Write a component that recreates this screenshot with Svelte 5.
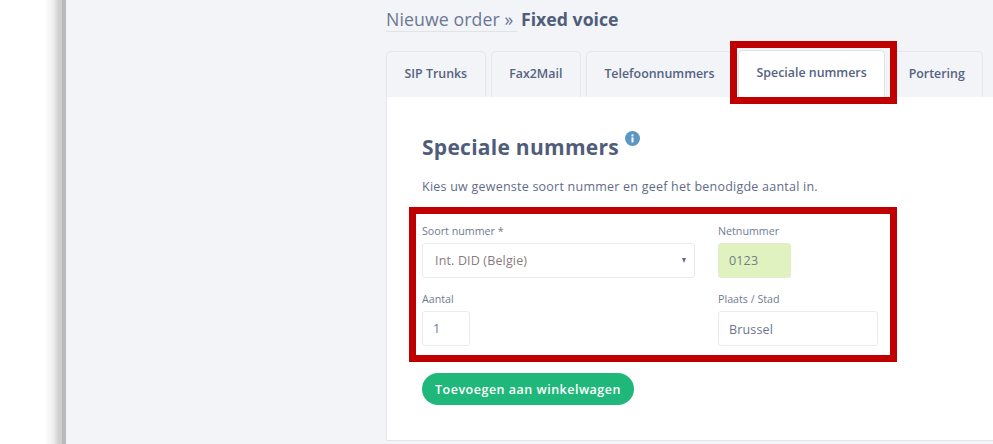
<script lang="ts">
  const tabs = [
    { label: 'SIP Trunks' },
    { label: 'Fax2Mail' },
    { label: 'Telefoonnummers' },
    { label: 'Speciale nummers', active: true },
    { label: 'Portering' }
  ];
</script>

<div class="page">
  <div class="sidebar"></div>

  <main class="content">
    <h1 class="crumbs">
      <span class="crumb-link">Nieuwe order »</span>
      <strong>Fixed voice</strong>
    </h1>

    <nav class="tabs">
      {#each tabs as tab}
        <div class="tab" class:active={tab.active}>
          {tab.label}
          {#if tab.active}<span class="marker tab-marker"></span>{/if}
        </div>
      {/each}
    </nav>

    <section class="panel">
      <h2 class="panel-title">
        Speciale nummers
        <svg class="info" width="15" height="15" viewBox="0 0 15 15">
          <circle cx="7.5" cy="7.5" r="7.5" fill="#5b97c2" />
          <rect x="6.5" y="6.4" width="2" height="5" fill="#fff" />
          <rect x="6.5" y="3.4" width="2" height="2" fill="#fff" />
        </svg>
      </h2>
      <p class="intro">Kies uw gewenste soort nummer en geef het benodigde aantal in.</p>

      <form class="order-form">
        <span class="marker form-marker"></span>

        <div class="field">
          <span class="field-label">Soort nummer *</span>
          <div class="input select">
            <span class="select-value">Int. DID (Belgie)</span>
            <span class="caret"></span>
          </div>
        </div>
        <div class="field">
          <span class="field-label">Netnummer</span>
          <div class="input area">0123</div>
        </div>
        <div class="field">
          <span class="field-label">Aantal</span>
          <div class="input qty">1</div>
        </div>
        <div class="field">
          <span class="field-label">Plaats / Stad</span>
          <div class="input low">Brussel</div>
        </div>
      </form>

      <button class="add-btn" type="button">Toevoegen aan winkelwagen</button>
    </section>
  </main>
</div>

<style>
  :global(body) {
    margin: 0;
    overflow: hidden;
    background: #fff;
  }

  .page {
    display: flex;
    width: 993px;
    height: 444px;
    overflow: hidden;
    font-family: "Open Sans", sans-serif;
    color: #5a6782;
  }

  .sidebar {
    width: 66px;
    flex-shrink: 0;
    background: linear-gradient(to right, #fff 0, #fff 45px, #f5f5f5 50px, #ececec 54px, #d2d2d2 58px, #cccccc 62px, #bababa 62px, #bababa 66px);
  }

  .content {
    flex: 1;
    min-width: 0;
    background: #f2f4f8;
    padding-left: 320px;
  }

  /* Heading */
  .crumbs {
    margin: 0;
    padding-top: 7px;
    height: 39px;
    box-sizing: border-box;
    font-size: 17.7px;
    font-weight: 400;
    line-height: 24px;
    white-space: nowrap;
    color: #6b7794;
  }

  .crumb-link {
    display: inline-block;
    height: 24px;
    padding-right: 4px;
    letter-spacing: 0.1px;
    border-bottom: 1px solid #dfe3ea;
  }

  .crumbs strong {
    margin-left: -1px;
    font-weight: 700;
    font-size: 17.7px;
    color: #4f5d7a;
  }

  /* Tabs */
  .tabs {
    display: flex;
    gap: 5px;
    margin-top: 12px;
    height: 46px;
    white-space: nowrap;
  }

  .tab {
    position: relative;
    box-sizing: border-box;
    height: 46px;
    padding: 13px 17.5px 0;
    font-size: 12.4px;
    line-height: 18px;
    font-weight: 600;
    color: #56637f;
    border: 1px solid #e4e7ed;
    border-bottom: 0;
    border-radius: 5px 5px 0 0;
  }

  .tab.active {
    margin-top: -1px;
    height: 47px;
    padding-top: 13px;
    background: #fff;
    border-color: #dfe3ea;
  }

  /* red annotations lying over the screenshot */
  .marker {
    position: absolute;
    z-index: 1;
    box-sizing: border-box;
    border: 7px solid #c00000;
    pointer-events: none;
  }

  .tab-marker {
    left: -9px;
    right: -13px;
    top: -10px;
    height: 63px;
  }

  /* Panel */
  .panel {
    height: 344px;
    box-sizing: border-box;
    padding: 0 0 0 35px;
    background: #fff;
    border-left: 1px solid #e4e7ed;
    border-bottom: 1px solid #e1e5ee;
  }

  .panel-title {
    position: relative;
    margin: 0;
    padding-top: 35px;
    font-size: 21px;
    line-height: 30px;
    font-weight: 700;
    letter-spacing: 0.27px;
    color: #4f5d7a;
  }

  .info {
    position: absolute;
    left: 203px;
    top: 34px;
  }

  .intro {
    margin: 16px 0 0;
    font-size: 12.5px;
    line-height: 18px;
    letter-spacing: 0.23px;
    color: #5f6c88;
  }

  /* Form */
  .order-form {
    position: relative;
    display: grid;
    grid-template-columns: 273px 160px;
    column-gap: 23px;
    row-gap: 14px;
    margin-top: 28px;
    width: 456px;
  }

  .form-marker {
    left: -13px;
    top: -17px;
    width: 488px;
    height: 155px;
  }

  .field {
    display: flex;
    flex-direction: column;
    gap: 4px;
    align-items: flex-start;
  }

  .field-label {
    font-size: 10.7px;
    line-height: 15px;
    color: #6f7b94;
  }

  .input {
    box-sizing: border-box;
    width: 100%;
    height: 35px;
    padding: 0 10px;
    font-size: 12.5px;
    line-height: 33px;
    letter-spacing: 0.15px;
    color: #6b7690;
    background: #fff;
    border: 1px solid #e9ebef;
    border-radius: 3px;
  }

  .low {
    line-height: 35px;
  }

  .select {
    display: flex;
    align-items: center;
    justify-content: space-between;
    padding: 0 8px 0 12px;
  }

  .select-value {
    color: #8a7a80;
  }

  .caret {
    width: 0;
    height: 0;
    border-left: 2.5px solid transparent;
    border-right: 2.5px solid transparent;
    border-top: 5px solid #5f6c88;
  }

  .area {
    width: 73px;
    background: #e0f2c0;
    border-color: #e0efc8;
    color: #6f8080;
  }

  .qty {
    width: 48px;
  }

  /* Button */
  .add-btn {
    display: block;
    margin-top: 27px;
    width: 212px;
    height: 32px;
    padding: 0;
    border: 0;
    border-radius: 16px;
    background: #20b87a;
    color: #fff;
    font-family: inherit;
    font-size: 12.5px;
    font-weight: 600;
    letter-spacing: 0.5px;
  }
</style>
